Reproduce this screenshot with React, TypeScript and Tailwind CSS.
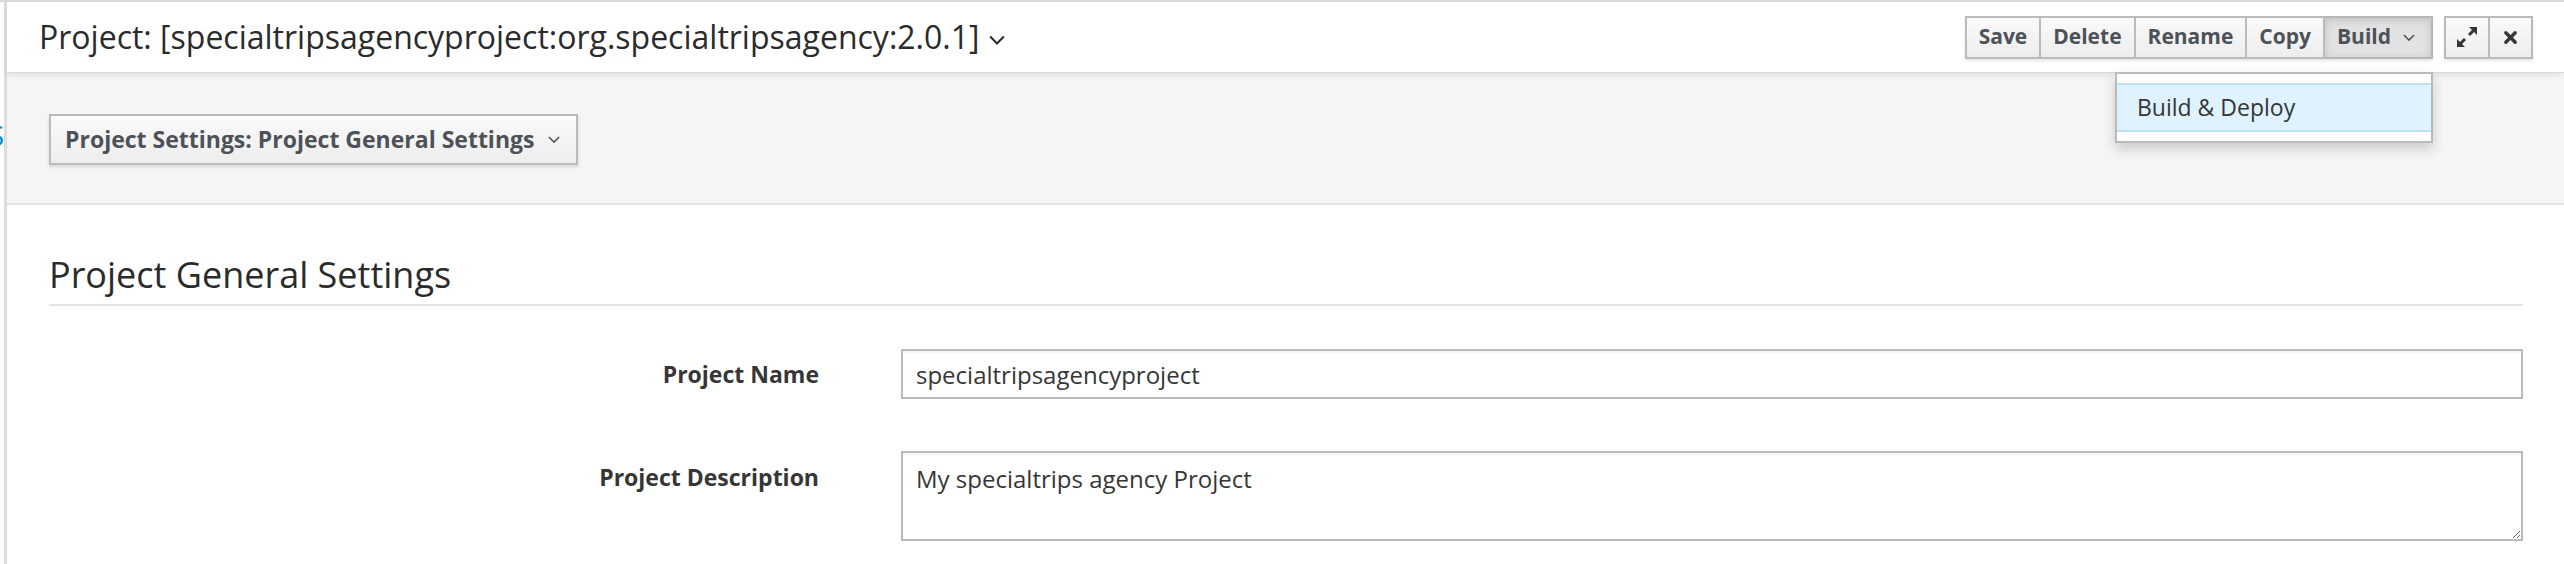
import React from "react"

function Chevron({ className }: { className?: string }) {
  return (
    <svg viewBox="0 0 14 8" className={className} fill="none" stroke="currentColor" strokeWidth="1.8">
      <polyline points="1,1 7,7 13,1" />
    </svg>
  )
}

function ExpandIcon() {
  return (
    <svg viewBox="0 0 20 20" className="w-[20px] h-[20px]" fill="currentColor">
      <polygon points="20,0 20,8 12,0" />
      <line x1="17" y1="3" x2="12" y2="8" stroke="currentColor" strokeWidth="3" />
      <polygon points="0,20 0,12 8,20" />
      <line x1="3" y1="17" x2="8" y2="12" stroke="currentColor" strokeWidth="3" />
    </svg>
  )
}

function CloseIcon() {
  return (
    <svg viewBox="0 0 16 16" className="w-[15px] h-[15px]" fill="none" stroke="currentColor" strokeWidth="3.6" strokeLinecap="round">
      <path d="M3 3 L13 13 M13 3 L3 13" />
    </svg>
  )
}

const btn =
  "h-[43px] px-[12px] flex items-center gap-[10px] border-2 border-[#bbbbbb] bg-linear-to-b from-[#fafafa] to-[#ededed] text-[21px] font-bold text-[#4d5258]"

export default function App() {
  return (
    <div className="h-screen overflow-hidden bg-white border-t-2 border-[#dadada] flex font-['Open_Sans',sans-serif] text-[#363636]">
      {/* clipped side panel */}
      <div className="w-[4px] shrink-0 overflow-hidden flex justify-end pt-[119px]">
        <span className="text-[28px] leading-[28px] text-[#0088ce]">S</span>
      </div>
      <div className="w-[3px] shrink-0 bg-[#dddddd]" />

      <div className="flex-1 min-w-0 flex flex-col">
        {/* header */}
        <div className="relative z-10 h-[71px] shrink-0 flex items-center justify-between pl-[32px] pr-[31px] border-b border-[#d8d8d8] shadow-[0_3px_6px_rgba(0,0,0,0.07)] bg-white">
          <div className="flex items-center gap-[10px]">
            <span className="text-[32px] leading-[40px] text-[#2b2b2b]">
              Project: [specialtripsagencyproject:org.specialtripsagency:2.0.1]
            </span>
            <Chevron className="w-[16px] h-[10px] mt-[6px] text-[#2b2b2b]" />
          </div>

          <div className="flex items-center gap-[11px]">
            <div className="flex shadow-[0_2px_3px_rgba(3,3,3,0.1)]">
              <button className={btn}>Save</button>
              <button className={btn + " border-l-0"}>Delete</button>
              <button className={btn + " border-l-0"}>Rename</button>
              <button className={btn + " border-l-0"}>Copy</button>
              <div className="relative">
                <button className="h-[43px] px-[12px] flex items-center gap-[12px] border-2 border-l-0 border-[#b7b7b7] bg-[#e2e2e2] shadow-[inset_0_2px_8px_rgba(3,3,3,0.15)] text-[21px] font-bold text-[#4d5258]">
                  Build
                  <Chevron className="w-[12px] h-[7px] mr-[4px]" />
                </button>
                <div className="absolute right-0 top-full mt-[13px] w-[318px] bg-white border-2 border-[#bbbbbb] py-[9px] shadow-[0_6px_12px_rgba(0,0,0,0.175)]">
                  <div className="h-[49px] flex items-center pl-[20px] bg-[#def3ff] border-y-2 border-[#bee1f4] text-[23px] text-[#363636]">
                    Build &amp; Deploy
                  </div>
                </div>
              </div>
            </div>

            <div className="flex text-[#363636] shadow-[0_2px_3px_rgba(3,3,3,0.1)]">
              <button className="w-[46px] h-[43px] flex items-center justify-center border-2 border-[#bbbbbb] bg-linear-to-b from-[#fafafa] to-[#ededed]">
                <ExpandIcon />
              </button>
              <button className="w-[43px] h-[43px] flex items-center justify-center border-2 border-l-0 border-[#bbbbbb] bg-linear-to-b from-[#fafafa] to-[#ededed]">
                <CloseIcon />
              </button>
            </div>
          </div>
        </div>

        {/* settings selector */}
        <div className="shrink-0 bg-[#f5f5f5] border-b-2 border-[#e3e3e3] pl-[42px] pt-[41px] pb-[38px]">
          <button className="h-[51px] px-[14px] flex items-center gap-[14px] border-2 border-[#bbbbbb] bg-linear-to-b from-[#fafafa] to-[#ededed] shadow-[0_2px_3px_rgba(3,3,3,0.12)] text-[23px] font-bold text-[#4d5258]">
            Project Settings: Project General Settings
            <Chevron className="w-[12px] h-[7px] mr-[2px]" />
          </button>
        </div>

        {/* content */}
        <div className="pl-[42px] pr-[41px]">
          <h3 className="mt-[48px] pb-[8px] text-[36px] leading-[43px] font-normal text-[#2b2b2b] border-b-2 border-[#e5e5e5]">
            Project General Settings
          </h3>

          <div className="mt-[43px] flex items-center gap-[82px]">
            <label className="w-[770px] shrink-0 text-right text-[23px] font-bold text-[#363636]">Project Name</label>
            <input
              className="flex-1 h-[50px] px-[13px] border-2 border-[#bbbbbb] shadow-[inset_0_2px_2px_rgba(3,3,3,0.05)] text-[24px] text-[#363636] outline-none"
              defaultValue="specialtripsagencyproject"
            />
          </div>

          <div className="mt-[52px] flex items-start gap-[82px]">
            <label className="w-[770px] shrink-0 pt-[8px] leading-[36px] text-right text-[23px] font-bold text-[#363636]">
              Project Description
            </label>
            <textarea
              className="flex-1 h-[90px] px-[13px] pt-[8px] leading-[36px] border-2 border-[#bbbbbb] shadow-[inset_0_2px_2px_rgba(3,3,3,0.05)] text-[24px] text-[#363636] outline-none"
              defaultValue="My specialtrips agency Project"
            />
          </div>
        </div>
      </div>
    </div>
  )
}
